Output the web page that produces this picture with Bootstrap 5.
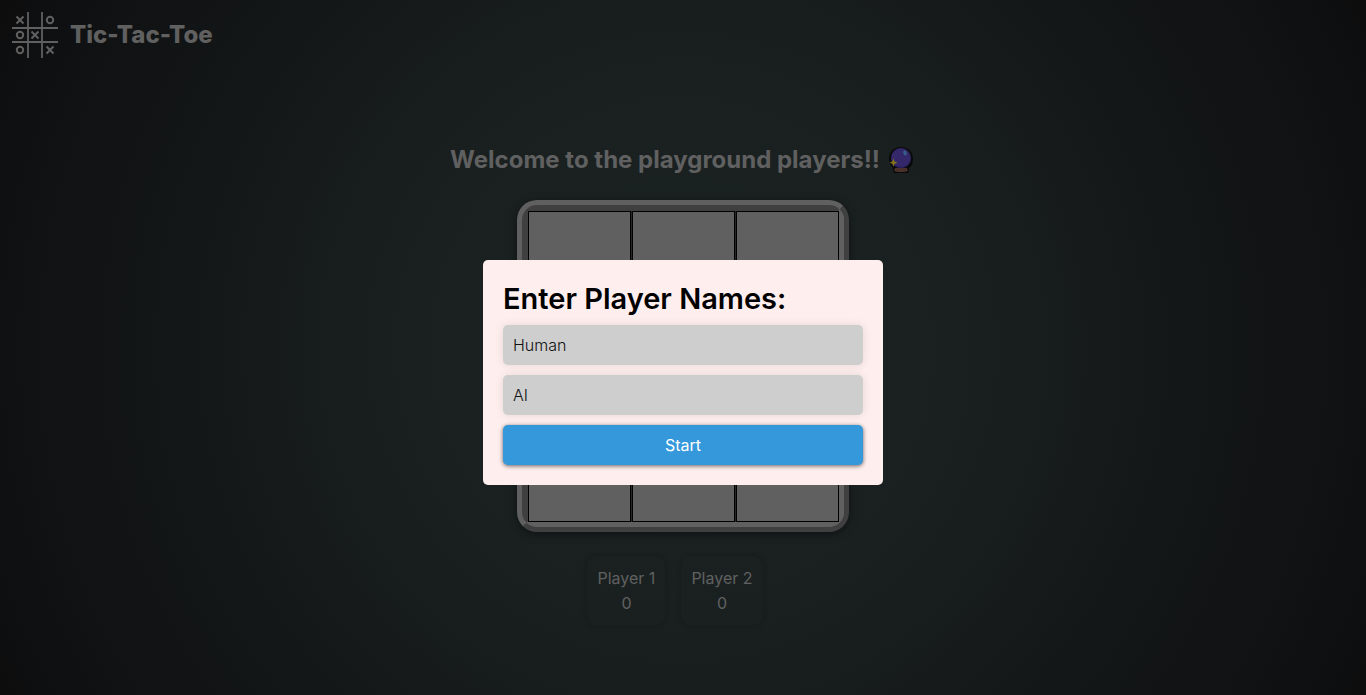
<!DOCTYPE html>
<html lang="en">
<head>
<meta charset="utf-8">
<meta name="viewport" content="width=device-width, initial-scale=1">
<title>Tic-Tac-Toe</title>
<link href="https://cdn.jsdelivr.net/npm/bootstrap@5.3.0/dist/css/bootstrap.min.css" rel="stylesheet">
<style>
  body {
    font-family: Inter, "Liberation Sans", sans-serif;
    color: #606060;
    background: #0f0f0f radial-gradient(circle farthest-corner at center, #1c2323 0%, #1a2020 35%, #151919 58%, #101213 85%, #0d0d0e 100%) no-repeat;
  }
  .brand-title { font-size: 24px; line-height: 32px; font-weight: 800; }
  .welcome { font-size: 24px; line-height: 28px; font-weight: 700; margin-bottom: 26px; }
  .board {
    width: 332px;
    height: 332px;
    border: 5px solid;
    border-color: #606060 #404040 #404040 #606060;
    border-radius: 20px;
    background: #606060;
    box-shadow: 0 2px 8px rgba(0, 0, 0, .5);
  }
  .board-rim {
    height: 100%;
    padding: 1px 0 0 1px;
    border: 5px solid;
    border-color: #404040 #606060 #606060 #404040;
    border-radius: 15px;
    background: #404040;
  }
  .board-grid {
    display: grid;
    grid-template: repeat(3, 1fr) / repeat(3, 1fr);
    gap: 1px;
    height: 100%;
    background: #262626;
  }
  .board-cell { border: 1px solid #000; background: #606060; padding: 0; }
  .score {
    padding: 10px;
    line-height: 25px;
    border-radius: 10px;
    box-shadow: 0 0 5px rgba(0, 0, 0, .25);
  }
  .names-layer { padding-top: 50px; pointer-events: none; }
  .names-dialog {
    width: 400px;
    padding: 20px;
    border-radius: 5px;
    background: #ffeeee;
    color: #000;
    pointer-events: auto;
  }
  .names-title { font-size: 29px; line-height: 37px; font-weight: 600; }
  .names-fields { gap: 10px; }
  .names-dialog .form-control {
    height: 40px;
    padding: 0 10px;
    border: 0;
    border-radius: 5px;
    background: #cecece;
    color: #111;
    font-weight: 300;
    box-shadow: 0 0 10px rgba(0, 0, 0, .1);
  }
  .btn-start {
    height: 40px;
    padding: 0;
    border: 0;
    border-radius: 5px;
    background: #3498db;
    color: #fff;
    box-shadow: 0 1px 4px rgba(0, 0, 0, .6);
  }
</style>
</head>
<body class="min-vh-100">
<header class="d-flex align-items-center gap-2 px-2 pt-2 pb-2">
  <svg class="ms-1 my-1" width="50" height="46" viewBox="0 0 50 46" fill="none" stroke="#606060" stroke-width="2" aria-hidden="true">
    <path d="M16 0v46M30 0v46M0 16h46M0 30h46" stroke-width="1.800"/>
    <path d="M4.500 4.500l7 7M11.500 4.500l-7 7M19.500 19.500l7 7M26.500 19.500l-7 7M34.500 34.500l7 7M41.500 34.500l-7 7"/>
    <circle cx="38" cy="8" r="3.200"/><circle cx="8" cy="23" r="3.200"/><circle cx="8" cy="38" r="3.200"/>
  </svg>
  <h1 class="brand-title mb-0">Tic-Tac-Toe</h1>
</header>

<main class="d-flex flex-column align-items-center pt-5">
  <h2 class="welcome d-flex align-items-center gap-2 mt-4 pt-1">Welcome to the playground players!!
    <svg width="28" height="28" viewBox="0 0 26 28" role="img" aria-label="Crystal ball">
      <path d="M12 1C4.500 1 0 6 0 13c0 4 2 7 4 9v3c0 1.500 1 2 2 2h12c1 0 2-.5 2-2v-3c3-2 4-5 4-9C24 6 19.500 1 12 1z" fill="#090909"/>
      <path d="M6 22h12l1 3c-3 1.400-11 1.400-14 0z" fill="#49302b"/>
      <circle cx="12" cy="12" r="10" fill="#34286b"/>
      <path d="M4 17c4 5 12 5 16 0-1 3-4 5-8 5s-7-2-8-5z" fill="#291f58"/>
      <ellipse cx="16" cy="7" rx="1.700" ry="2.600" fill="#355f88" transform="rotate(-20 16 7)"/>
      <path d="M4.500 12.500l1.100 3 2.900 1.200-2.900 1.100-1.100 3-1.200-3-2.800-1.100 2.800-1.200z" fill="#83751b"/>
    </svg>
  </h2>

  <div class="board">
    <div class="board-rim">
      <div class="board-grid">
        <button type="button" class="board-cell" aria-label="Cell 1"></button>
        <button type="button" class="board-cell" aria-label="Cell 2"></button>
        <button type="button" class="board-cell" aria-label="Cell 3"></button>
        <button type="button" class="board-cell" aria-label="Cell 4"></button>
        <button type="button" class="board-cell" aria-label="Cell 5"></button>
        <button type="button" class="board-cell" aria-label="Cell 6"></button>
        <button type="button" class="board-cell" aria-label="Cell 7"></button>
        <button type="button" class="board-cell" aria-label="Cell 8"></button>
        <button type="button" class="board-cell" aria-label="Cell 9"></button>
      </div>
    </div>
  </div>

  <div class="d-flex text-center mt-4">
    <div class="score me-3"><div>Player 1</div><div>0</div></div>
    <div class="score me-3"><div>Player 2</div><div>0</div></div>
  </div>
</main>

<div class="names-layer position-fixed top-0 start-0 w-100 h-100 d-flex align-items-center justify-content-center">
  <form class="names-dialog" role="dialog" aria-labelledby="names-title">
    <h2 class="names-title" id="names-title">Enter Player Names:</h2>
    <div class="d-grid names-fields">
      <input class="form-control" type="text" value="Human" aria-label="Player 1 name">
      <input class="form-control" type="text" value="AI" aria-label="Player 2 name">
      <button class="btn btn-start" type="button">Start</button>
    </div>
  </form>
</div>
<script src="https://cdn.jsdelivr.net/npm/bootstrap@5.3.0/dist/js/bootstrap.bundle.min.js"></script>
</body>
</html>
